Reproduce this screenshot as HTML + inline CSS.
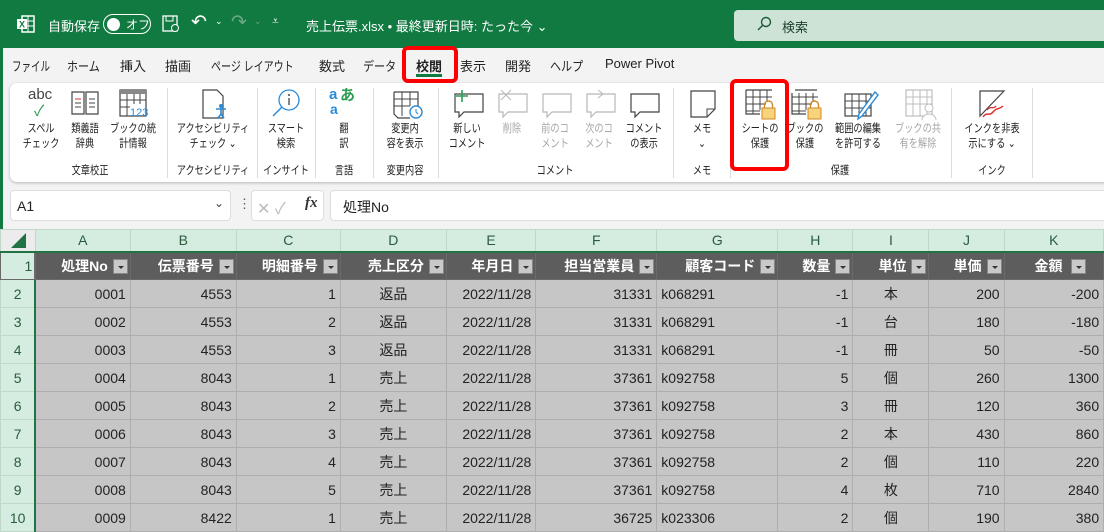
<!DOCTYPE html>
<html><head><meta charset="utf-8">
<style>
*{margin:0;padding:0;box-sizing:border-box}
body{width:1104px;height:530px;overflow:hidden;position:relative;background:#f3f3f3;font-family:"Liberation Sans","Noto Sans CJK JP",sans-serif;color:#222}
.a{position:absolute;white-space:nowrap}
#title{left:0;top:0;width:1104px;height:48px;background:#117a41;color:#fff;font-size:13px}
.tab{top:56px;font-size:13px;color:#222;transform-origin:0 0}
#ribbon{left:10px;top:83px;width:1100px;height:99px;background:#fff;border-radius:7px;box-shadow:0 1px 3px rgba(0,0,0,.25)}
.lbl{font-size:11.5px;line-height:15px;text-align:center;color:#222;transform:translateX(-50%) scaleX(.8)}
.dis{color:#a6a6a6}
.grp{top:162px;font-size:11.5px;color:#222;transform:translateX(-50%) scaleX(.8)}
.sep{top:88px;width:1px;height:90px;background:#dcdcdc}
.red{border:4px solid #f00;border-radius:6px}
table{position:absolute;left:0;top:229px;border-collapse:collapse;table-layout:fixed;font-size:14px}
td{height:28px;border:1px solid #aeaeae;background:#c6c6c6;color:#222;padding:0 4px;overflow:hidden;white-space:nowrap;text-align:right}
tr.ch td{height:22px;background:#d4ede0;color:#2b5b3c;text-align:center;border-color:#c0d8c8;border-bottom:2px solid #217346}
td.rh{background:#d4ede0;color:#2b5b3c;text-align:center;border-color:#c0d8c8;border-right:2px solid #217346;padding:0}
tr.hd td{background:#5d5d5d;color:#fff;font-weight:bold;border-color:#6a6a6a;text-align:right;padding-right:2px}
tr.hd td.rh{background:#d4ede0;color:#2b5b3c;font-weight:normal}
.fb{display:inline-block;width:15px;height:15px;background:#c9c9c9;border:1px solid #888;vertical-align:middle;margin-left:5px;position:relative;top:-1px}
.fb:after{content:"";position:absolute;left:4px;top:6px;border-left:3px solid transparent;border-right:3px solid transparent;border-top:3px solid #333}
td.c{text-align:center}td.l{text-align:left}
</style></head><body>
<div id="title" class="a">
 <svg class="a" style="left:16px;top:14px" width="20" height="20" viewBox="0 0 20 20"><rect x="6" y="2" width="12" height="16" fill="none" stroke="#fff" stroke-width="1.5"/><line x1="12" y1="2" x2="12" y2="18" stroke="#fff"/><line x1="6" y1="7" x2="18" y2="7" stroke="#fff"/><line x1="6" y1="12" x2="18" y2="12" stroke="#fff"/><rect x="1" y="5" width="10" height="10" fill="#fff"/><text x="3" y="13.5" font-size="9" font-weight="bold" fill="#117a41" font-family="Liberation Sans">X</text></svg>
 <div class="a" style="left:48px;top:16px">自動保存</div>
 <div class="a" style="left:103px;top:14px;width:48px;height:20px;border:1.5px solid #fff;border-radius:10px"></div>
 <div class="a" style="left:107px;top:18px;width:13px;height:13px;background:#fff;border-radius:50%"></div>
 <div class="a" style="left:126px;top:16px;font-size:12px">オフ</div>
 <svg class="a" style="left:162px;top:15px" width="18" height="18"><rect x="1" y="1" width="14" height="15" fill="none" stroke="#fff" stroke-width="1.3"/><rect x="4" y="1" width="7" height="5" fill="none" stroke="#fff"/><circle cx="13" cy="13" r="3.5" fill="#117a41" stroke="#fff"/></svg>
 <div class="a" style="left:191px;top:11px;font-size:19px">↶</div>
 <div class="a" style="left:215px;top:16px;font-size:9px">⌄</div>
 <div class="a" style="left:231px;top:11px;font-size:19px;color:#6aa884">↷</div>
 <div class="a" style="left:254px;top:16px;font-size:9px;color:#6aa884">⌄</div>
 <div class="a" style="left:272px;top:14px;font-size:12px">⩡</div>
 <div class="a" style="left:306px;top:16px">売上伝票.xlsx • 最終更新日時: たった今 ⌄</div>
 <div class="a" style="left:734px;top:10px;width:380px;height:31px;background:#cde3d6;border-radius:4px"></div>
 <svg class="a" style="left:756px;top:16px" width="16" height="16"><circle cx="10" cy="6" r="4.5" fill="none" stroke="#1d5a36" stroke-width="1.4"/><line x1="7" y1="9" x2="2" y2="14" stroke="#1d5a36" stroke-width="1.5"/></svg>
 <div class="a" style="left:782px;top:17px;color:#1d3d2a">検索</div>
</div>
<div class="a tab" style="left:12px;transform:scaleX(.73)">ファイル</div>
<div class="a tab" style="left:67px;transform:scaleX(.85)">ホーム</div>
<div class="a tab" style="left:120px">挿入</div>
<div class="a tab" style="left:165px">描画</div>
<div class="a tab" style="left:211px;transform:scaleX(.77)">ページ レイアウト</div>
<div class="a tab" style="left:319px">数式</div>
<div class="a tab" style="left:363px;transform:scaleX(.85)">データ</div>
<div class="a tab" style="left:416px;font-weight:bold">校閲</div>
<div class="a" style="left:416px;top:74px;width:26px;height:3px;background:#117a41"></div>
<div class="a tab" style="left:460px">表示</div>
<div class="a tab" style="left:505px">開発</div>
<div class="a tab" style="left:550px;transform:scaleX(.85)">ヘルプ</div>
<div class="a tab" style="left:605px">Power Pivot</div>
<div class="a red" style="left:402px;top:46px;width:56px;height:37px"></div>
<div id="ribbon" class="a"></div>
<div class="a" style="left:28px;top:86px;font-size:15px;color:#444">abc</div>
<div class="a" style="left:34px;top:100px;font-size:15px;color:#2e9c52">✓</div>
<svg class="a" style="left:70px;top:90px" width="30" height="28"><path d="M2 2h12v22H2zM16 2h12v22H16z" fill="none" stroke="#444" stroke-width="1.2"/><path d="M5 9h6M5 13h6M5 17h6M19 9h6M19 13h6M19 17h6" stroke="#444"/><path d="M5 9h6" stroke="#e03030"/></svg>
<svg class="a" style="left:118px;top:88px" width="30" height="30"><rect x="2" y="2" width="26" height="26" fill="none" stroke="#444" stroke-width="1.2"/><rect x="2" y="2" width="26" height="4" fill="#888"/><path d="M2 12h26M2 19h10M9 6v22M16 6v10M22 6v10" stroke="#444"/><text x="12" y="28" font-size="11" fill="#2a8bd8" font-family="Liberation Sans">123</text></svg>
<svg class="a" style="left:200px;top:88px" width="30" height="32"><path d="M3 2h14l6 6v22H3z" fill="none" stroke="#444" stroke-width="1.2"/><circle cx="21" cy="18" r="2" fill="#2a8bd8"/><path d="M16 21h10M21 20v6M18 30l3-4 3 4" stroke="#2a8bd8" stroke-width="1.6" fill="none"/></svg>
<svg class="a" style="left:270px;top:88px" width="32" height="32"><circle cx="19" cy="12" r="10" fill="none" stroke="#2a8bd8" stroke-width="1.3"/><path d="M12 19L3 28" stroke="#2a8bd8" stroke-width="1.5"/><path d="M19 10v7" stroke="#444" stroke-width="1.3"/><circle cx="19" cy="7" r="1" fill="#444"/></svg>
<div class="a" style="left:329px;top:86px;font-size:15px;font-weight:bold;color:#2a8bd8">a</div>
<div class="a" style="left:340px;top:84px;font-size:15px;font-weight:bold;color:#2e9c52">あ</div>
<div class="a" style="left:330px;top:101px;font-size:14px;font-weight:bold;color:#2a8bd8">a</div>
<svg class="a" style="left:392px;top:90px" width="32" height="30"><path d="M2 2h24v16M2 2v22l4 4h12" fill="none" stroke="#444" stroke-width="1.2"/><path d="M2 9h24M2 16h16M10 2v24M18 2v14" stroke="#444"/><circle cx="24" cy="22" r="6" fill="#fff" stroke="#2a8bd8" stroke-width="1.4"/><path d="M24 19v3l2 2" stroke="#2a8bd8" fill="none"/></svg>
<svg class="a" style="left:452px;top:88px" width="34" height="32"><path d="M3 6h28v18H12l-5 5v-5H3z" fill="none" stroke="#444" stroke-width="1.2"/><path d="M10 2v12M4 8h12" stroke="#2e9c52" stroke-width="1.6"/></svg>
<svg class="a" style="left:496px;top:88px" width="34" height="32"><path d="M3 6h28v18H12l-5 5v-5H3z" fill="none" stroke="#b8b8b8" stroke-width="1.2"/><path d="M5 2l10 10M15 2L5 12" stroke="#b8b8b8"/></svg>
<svg class="a" style="left:540px;top:88px" width="34" height="32"><path d="M3 6h28v18H12l-5 5v-5H3z" fill="none" stroke="#b8b8b8" stroke-width="1.2"/></svg>
<svg class="a" style="left:584px;top:88px" width="34" height="32"><path d="M3 6h28v18H12l-5 5v-5H3z" fill="none" stroke="#b8b8b8" stroke-width="1.2"/><path d="M14 2l5 4-5 4" fill="none" stroke="#b8b8b8"/></svg>
<svg class="a" style="left:628px;top:88px" width="34" height="32"><path d="M3 6h28v18H12l-5 5v-5H3z" fill="none" stroke="#444" stroke-width="1.2"/></svg>
<svg class="a" style="left:689px;top:88px" width="28" height="32"><path d="M2 3h24v18l-8 8H2z" fill="none" stroke="#444" stroke-width="1.2"/><path d="M18 29v-8h8" fill="none" stroke="#444"/></svg>
<svg class="a" style="left:744px;top:88px" width="34" height="34"><path d="M2 2h26M2 2v24h14" fill="none" stroke="#444" stroke-width="1.2"/><path d="M2 9h26M2 16h20M2 23h14M9 2v24M16 2v20M23 2v12" stroke="#444"/><rect x="18" y="20" width="13" height="11" fill="#f7d37c" stroke="#d08a26"/><path d="M20.5 20v-3a4 4 0 0 1 8 0v3" fill="none" stroke="#d08a26" stroke-width="1.4"/></svg>
<svg class="a" style="left:790px;top:88px" width="34" height="34"><path d="M5 2h22M2 5v21h14" fill="none" stroke="#444" stroke-width="1.2"/><path d="M2 9h26M2 16h20M2 23h14M9 5v21M16 5v17M23 5v9" stroke="#444"/><rect x="18" y="20" width="13" height="11" fill="#f7d37c" stroke="#d08a26"/><path d="M20.5 20v-3a4 4 0 0 1 8 0v3" fill="none" stroke="#d08a26" stroke-width="1.4"/></svg>
<svg class="a" style="left:843px;top:88px" width="36" height="34"><rect x="2" y="6" width="26" height="22" fill="none" stroke="#444" stroke-width="1.2"/><path d="M2 13h26M2 20h26M9 6v22M16 6v22M23 6v22" stroke="#444"/><path d="M32 4L16 26l-1 5 4-3L35 7z" fill="#fff" stroke="#2a8bd8" stroke-width="1.4"/></svg>
<svg class="a" style="left:904px;top:88px" width="34" height="34"><rect x="2" y="2" width="26" height="26" fill="none" stroke="#bdbdbd" stroke-width="1.2"/><path d="M2 9h26M2 16h26M9 2v26M16 2v26M23 2v26" stroke="#bdbdbd"/><circle cx="25" cy="20" r="4" fill="#fff" stroke="#bdbdbd"/><path d="M18 32a7 6 0 0 1 14 0" fill="#fff" stroke="#bdbdbd"/></svg>
<svg class="a" style="left:977px;top:88px" width="30" height="32"><path d="M3 3h24L3 28z" fill="none" stroke="#444" stroke-width="1.2"/><path d="M6 29c4-6 6 0 10-5s6-2 10-6" fill="none" stroke="#e03030" stroke-width="1.5"/><path d="M10 22c4-5 6 0 9-4" fill="none" stroke="#e03030" stroke-width="1.3"/></svg>
<div class="a lbl" style="left:41px;top:122px">スペル<br>チェック</div>
<div class="a lbl" style="left:85px;top:122px">類義語<br>辞典</div>
<div class="a lbl" style="left:133px;top:122px">ブックの統<br>計情報</div>
<div class="a lbl" style="left:213px;top:122px">アクセシビリティ<br>チェック ⌄</div>
<div class="a lbl" style="left:286px;top:122px">スマート<br>検索</div>
<div class="a lbl" style="left:344px;top:122px">翻<br>訳</div>
<div class="a lbl" style="left:405px;top:122px">変更内<br>容を表示</div>
<div class="a lbl" style="left:467px;top:122px">新しい<br>コメント</div>
<div class="a lbl dis" style="left:512px;top:122px">削除</div>
<div class="a lbl dis" style="left:555px;top:122px">前のコ<br>メント</div>
<div class="a lbl dis" style="left:599px;top:122px">次のコ<br>メント</div>
<div class="a lbl" style="left:644px;top:122px">コメント<br>の表示</div>
<div class="a lbl" style="left:702px;top:122px">メモ<br>⌄</div>
<div class="a lbl" style="left:760px;top:122px">シートの<br>保護</div>
<div class="a lbl" style="left:805px;top:122px">ブックの<br>保護</div>
<div class="a lbl" style="left:858px;top:122px">範囲の編集<br>を許可する</div>
<div class="a lbl dis" style="left:918px;top:122px">ブックの共<br>有を解除</div>
<div class="a lbl" style="left:992px;top:122px">インクを非表<br>示にする ⌄</div>
<div class="a grp" style="left:90px">文章校正</div>
<div class="a grp" style="left:213px">アクセシビリティ</div>
<div class="a grp" style="left:286px">インサイト</div>
<div class="a grp" style="left:344px">言語</div>
<div class="a grp" style="left:405px">変更内容</div>
<div class="a grp" style="left:555px">コメント</div>
<div class="a grp" style="left:702px">メモ</div>
<div class="a grp" style="left:840px">保護</div>
<div class="a grp" style="left:992px">インク</div>
<div class="a sep" style="left:167px"></div><div class="a sep" style="left:257px"></div><div class="a sep" style="left:315px"></div><div class="a sep" style="left:373px"></div><div class="a sep" style="left:438px"></div><div class="a sep" style="left:673px"></div><div class="a sep" style="left:730px"></div><div class="a sep" style="left:951px"></div><div class="a sep" style="left:1032px"></div>
<div class="a red" style="left:730px;top:79px;width:59px;height:92px"></div>
<div class="a" style="left:10px;top:190px;width:221px;height:31px;background:#fff;border:1px solid #ddd;border-radius:4px"></div>
<div class="a" style="left:17px;top:198px;font-size:14px">A1</div>
<div class="a" style="left:214px;top:196px;font-size:12px;color:#444">⌄</div>
<div class="a" style="left:238px;top:196px;font-size:13px;color:#555">⋮</div>
<div class="a" style="left:251px;top:190px;width:73px;height:31px;background:#fff;border:1px solid #ddd;border-radius:4px"></div>
<div class="a" style="left:257px;top:195px;font-size:16px;color:#bbb">✕ ✓</div>
<div class="a" style="left:305px;top:195px;font-size:15px;font-style:italic;font-family:'Liberation Serif',serif;font-weight:bold;color:#333">fx</div>
<div class="a" style="left:330px;top:190px;width:790px;height:31px;background:#fff;border:1px solid #ddd;border-radius:4px"></div>
<div class="a" style="left:343px;top:197px;font-size:14px">処理No</div>
<div class="a" style="left:0;top:0;width:3px;height:530px;background:#117a41"></div>
<table>
<colgroup><col style="width:35px"><col style="width:96px"><col style="width:107px"><col style="width:105px"><col style="width:107px"><col style="width:90px"><col style="width:122px"><col style="width:122px"><col style="width:76px"><col style="width:77px"><col style="width:76px"><col style="width:100px"></colgroup>
<tr class="ch"><td style="background:#ececec;border-right:1px solid #c0d8c8"><svg width="20" height="18" style="vertical-align:bottom"><path d="M18 2v15H3z" fill="#217346"/></svg></td><td>A</td><td>B</td><td>C</td><td>D</td><td>E</td><td>F</td><td>G</td><td>H</td><td>I</td><td>J</td><td>K</td></tr>
<tr class="hd"><td class="rh">1</td><td>処理No<span class="fb"></span></td><td>伝票番号<span class="fb"></span></td><td>明細番号<span class="fb"></span></td><td>売上区分<span class="fb"></span></td><td>年月日<span class="fb"></span></td><td>担当営業員<span class="fb"></span></td><td>顧客コード<span class="fb"></span></td><td>数量<span class="fb"></span></td><td>単位<span class="fb"></span></td><td>単価<span class="fb"></span></td><td style="text-align:left;padding-left:30px">金額 <span class="fb"></span></td></tr>
<tr><td class="rh">2</td><td>0001</td><td>4553</td><td>1</td><td class="c">返品</td><td>2022/11/28</td><td>31331</td><td class="l">k068291</td><td>-1</td><td class="c">本</td><td>200</td><td style="padding-right:0">-200&nbsp;</td></tr>
<tr><td class="rh">3</td><td>0002</td><td>4553</td><td>2</td><td class="c">返品</td><td>2022/11/28</td><td>31331</td><td class="l">k068291</td><td>-1</td><td class="c">台</td><td>180</td><td style="padding-right:0">-180&nbsp;</td></tr>
<tr><td class="rh">4</td><td>0003</td><td>4553</td><td>3</td><td class="c">返品</td><td>2022/11/28</td><td>31331</td><td class="l">k068291</td><td>-1</td><td class="c">冊</td><td>50</td><td style="padding-right:0">-50&nbsp;</td></tr>
<tr><td class="rh">5</td><td>0004</td><td>8043</td><td>1</td><td class="c">売上</td><td>2022/11/28</td><td>37361</td><td class="l">k092758</td><td>5</td><td class="c">個</td><td>260</td><td style="padding-right:0">1300&nbsp;</td></tr>
<tr><td class="rh">6</td><td>0005</td><td>8043</td><td>2</td><td class="c">売上</td><td>2022/11/28</td><td>37361</td><td class="l">k092758</td><td>3</td><td class="c">冊</td><td>120</td><td style="padding-right:0">360&nbsp;</td></tr>
<tr><td class="rh">7</td><td>0006</td><td>8043</td><td>3</td><td class="c">売上</td><td>2022/11/28</td><td>37361</td><td class="l">k092758</td><td>2</td><td class="c">本</td><td>430</td><td style="padding-right:0">860&nbsp;</td></tr>
<tr><td class="rh">8</td><td>0007</td><td>8043</td><td>4</td><td class="c">売上</td><td>2022/11/28</td><td>37361</td><td class="l">k092758</td><td>2</td><td class="c">個</td><td>110</td><td style="padding-right:0">220&nbsp;</td></tr>
<tr><td class="rh">9</td><td>0008</td><td>8043</td><td>5</td><td class="c">売上</td><td>2022/11/28</td><td>37361</td><td class="l">k092758</td><td>4</td><td class="c">枚</td><td>710</td><td style="padding-right:0">2840&nbsp;</td></tr>
<tr><td class="rh">10</td><td>0009</td><td>8422</td><td>1</td><td class="c">売上</td><td>2022/11/28</td><td>36725</td><td class="l">k023306</td><td>2</td><td class="c">個</td><td>190</td><td style="padding-right:0">380&nbsp;</td></tr>
</table>
</body></html>
